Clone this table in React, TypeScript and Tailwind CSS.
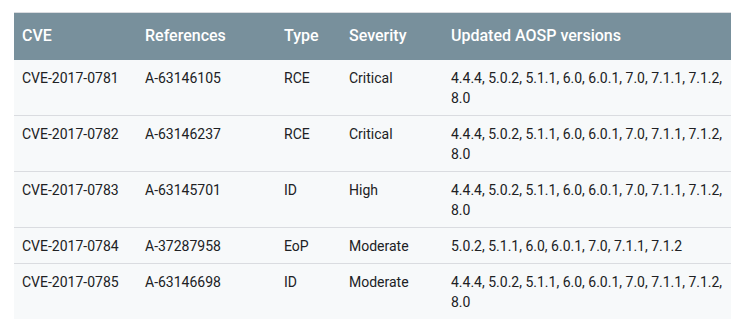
const rows = [
  { cve: "CVE-2017-0781", ref: "A-63146105", type: "RCE", sev: "Critical", ver: "4.4.4, 5.0.2, 5.1.1, 6.0, 6.0.1, 7.0, 7.1.1, 7.1.2, 8.0" },
  { cve: "CVE-2017-0782", ref: "A-63146237", type: "RCE", sev: "Critical", ver: "4.4.4, 5.0.2, 5.1.1, 6.0, 6.0.1, 7.0, 7.1.1, 7.1.2, 8.0" },
  { cve: "CVE-2017-0783", ref: "A-63145701", type: "ID", sev: "High", ver: "4.4.4, 5.0.2, 5.1.1, 6.0, 6.0.1, 7.0, 7.1.1, 7.1.2, 8.0" },
  { cve: "CVE-2017-0784", ref: "A-37287958", type: "EoP", sev: "Moderate", ver: "5.0.2, 5.1.1, 6.0, 6.0.1, 7.0, 7.1.1, 7.1.2" },
  { cve: "CVE-2017-0785", ref: "A-63146698", type: "ID", sev: "Moderate", ver: "4.4.4, 5.0.2, 5.1.1, 6.0, 6.0.1, 7.0, 7.1.1, 7.1.2, 8.0" },
];

export default function App() {
  return (
    <div className="min-h-screen bg-white pt-3 pl-[14px] font-['Roboto',sans-serif]">
      <table className="w-[717px] table-fixed border-collapse border-t border-[#dadce0]">
        <colgroup>
          <col className="w-[123px]" />
          <col className="w-[139px]" />
          <col className="w-[65px]" />
          <col className="w-[102px]" />
          <col />
        </colgroup>
        <thead>
          <tr className="h-[47px] bg-[#78909c] text-left text-[16px] font-medium text-white">
            <th className="px-2 font-medium">CVE</th>
            <th className="px-2 font-medium">References</th>
            <th className="px-2 font-medium">Type</th>
            <th className="px-2 font-medium">Severity</th>
            <th className="px-2 font-medium">Updated AOSP versions</th>
          </tr>
        </thead>
        <tbody className="bg-[#f7f9fa] text-[14px] leading-5 text-[#202124]">
          {rows.map((r, i) => (
            <tr key={r.cve} className={i > 0 ? "border-t border-[#dadce0]" : ""}>
              <td className="px-2 pt-2 pb-[7px] align-top">{r.cve}</td>
              <td className="px-2 pt-2 pb-[7px] align-top">{r.ref}</td>
              <td className="px-2 pt-2 pb-[7px] align-top">{r.type}</td>
              <td className="px-2 pt-2 pb-[7px] align-top">{r.sev}</td>
              <td className="px-2 pt-2 pb-[7px] align-top">{r.ver}</td>
            </tr>
          ))}
        </tbody>
      </table>
    </div>
  );
}
